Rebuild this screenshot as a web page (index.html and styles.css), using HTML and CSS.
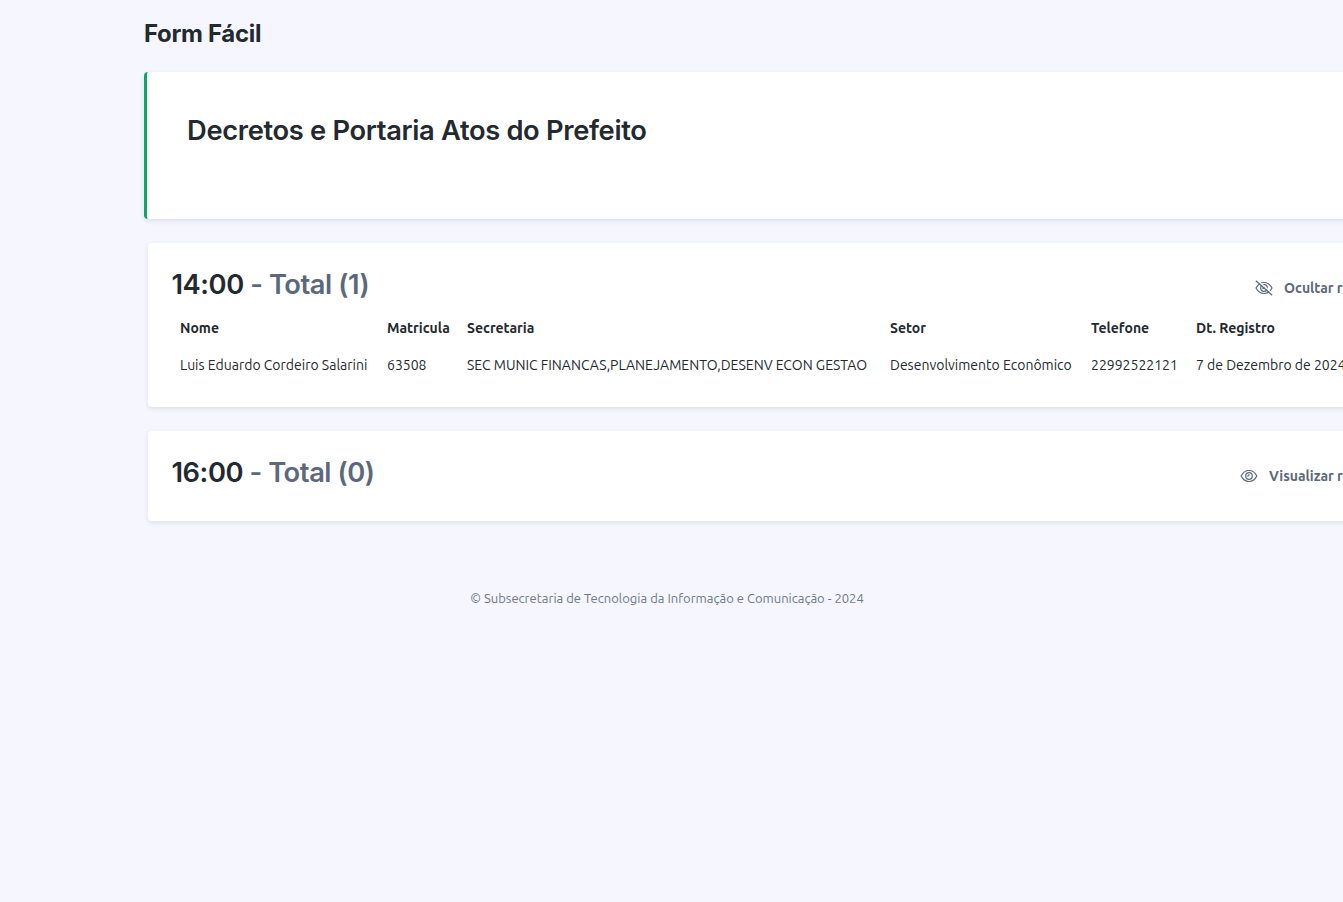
FILE: index.html
```html
<!DOCTYPE html>
<html lang="pt-BR">
<head>
<meta charset="utf-8">
<title>Form Fácil</title>
<link rel="stylesheet" href="styles.css">
</head>
<body>
<main class="page">
  <h1 class="brand">Form Fácil</h1>
  <section class="banner"><h2 class="title title-banner">Decretos e Portaria Atos do Prefeito</h2></section>
  <section class="card">
    <div class="card-head">
      <h2 class="title">14:00 <span class="muted">- Total (1)</span></h2>
      <a class="toggle toggle-hide">
        <svg class="icon" viewBox="0 0 18 18"><path d="M1 9C3 5.300 5.800 3.500 9 3.500S15 5.300 17 9C15 12.700 12.200 14.500 9 14.500S3 12.700 1 9Z"/><circle cx="9" cy="9" r="3.300"/><path d="M7.300 9.600C8.700 9.800 9.700 8.800 9.400 7.300"/><path class="slash-gap" d="M2 1 18 15"/><path d="M.8 1.800 17.200 16.200"/></svg>
        <span>Ocultar registros</span>
      </a>
    </div>
    <table class="records">
      <colgroup><col class="c-name"><col class="c-id"><col class="c-dept"><col class="c-sector"><col class="c-phone"><col class="c-date"></colgroup>
      <thead><tr><th>Nome</th><th>Matricula</th><th>Secretaria</th><th>Setor</th><th>Telefone</th><th>Dt. Registro</th></tr></thead>
      <tbody><tr><td>Luis Eduardo Cordeiro Salarini</td><td>63508</td><td>SEC MUNIC FINANCAS,PLANEJAMENTO,DESENV ECON GESTAO</td><td>Desenvolvimento Econômico</td><td>22992522121</td><td>7 de Dezembro de 2024</td></tr></tbody>
    </table>
  </section>
  <section class="card card-closed">
    <div class="card-head">
      <h2 class="title">16:00 <span class="muted">- Total (0)</span></h2>
      <a class="toggle toggle-show">
        <svg class="icon" viewBox="0 0 18 18"><path d="M1.200 9C3 5.300 5.800 3.500 9 3.500S15 5.300 16.800 9C15 12.700 12.200 14.500 9 14.500S3 12.700 1.200 9Z"/><circle cx="9" cy="9" r="3.300"/><path d="M7.200 9.200C8.400 9.300 9.200 8.400 9 7.200"/></svg>
        <span>Visualizar registros</span>
      </a>
    </div>
  </section>
  <footer class="footer">© Subsecretaria de Tecnologia da Informação e Comunicação - 2024</footer>
</main>
</body>
</html>
```
FILE: styles.css
```css
* { box-sizing: border-box; }
html { overflow: hidden; background: #f5f6ff; }
body { margin: 0; height: 902px; overflow: hidden; background: #f5f6ff; color: #23292f; font-family: Ubuntu, "Noto Sans", sans-serif; font-size: 14px; line-height: 21px; }
.page { width: 1600px; padding: 19px 0 0 144px; }
.brand { margin: 0 0 23px; font: 650 24px/30px Inter, sans-serif; letter-spacing: -0.33px; }
.banner { height: 147px; padding: 41px 40px; border-left: 3px solid #10a566; border-radius: 4px; background: #fff; box-shadow: 0 2px 5px rgba(35, 41, 70, .11); }
.title { margin: 0; font: 600 27.300px/36px Inter, sans-serif; letter-spacing: -0.44px; white-space: nowrap; }
.title-banner { letter-spacing: -0.33px; }
.muted { color: #5c687b; }
.card { height: 164px; margin: 24px 0 0 4px; padding: 24px 24px 24px 23.500px; border-radius: 4px; background: #fff; box-shadow: 0 2px 5px rgba(35, 41, 70, .11); }
.card-closed { height: 90px; }
.card-head { display: flex; justify-content: space-between; height: 43px; }
.toggle { display: flex; align-items: center; gap: 11px; height: 42px; color: #5c687b; font-weight: 600; white-space: nowrap; }
.toggle-hide { width: 321px; }
.toggle-show { width: 336px; }
.icon { width: 18px; height: 18px; fill: none; stroke: currentColor; stroke-width: 1.2; }
.slash-gap { stroke: #fff; }
.records { width: 1404px; margin-left: 0.5px; table-layout: fixed; border-collapse: collapse; text-align: left; white-space: nowrap; }
.records th { height: 37px; padding: 0 8px; font-weight: 600; }
.records td { height: 37px; padding: 0 8px; }
.c-name { width: 207px; }
.c-id { width: 80px; }
.c-dept { width: 423px; }
.c-sector { width: 201px; }
.c-phone { width: 105px; }
.footer { width: 1334px; margin: 67px 0 0 -144px; text-align: center; color: #707985; font-size: 13px; }
```
